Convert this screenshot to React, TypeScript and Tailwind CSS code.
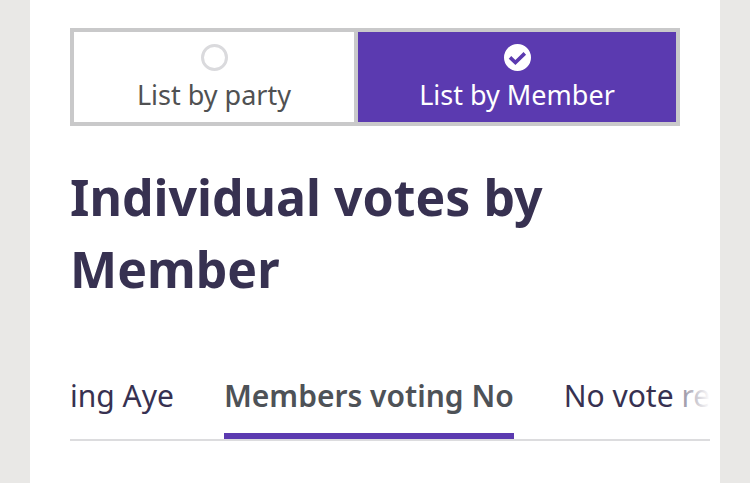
import { useState } from "react";

const views = ["List by party", "List by Member"];
const tabs = ["ing Aye", "Members voting No", "No vote re"];

export default function App() {
  const [view, setView] = useState(1);
  const [tab, setTab] = useState(1);

  return (
    <div className="min-h-screen bg-[#e9e8e6] px-[30px] font-['Noto_Sans',sans-serif]">
      <main className="min-h-screen bg-white px-10 pt-7">
        <div
          role="radiogroup"
          aria-label="Display"
          className="grid grid-cols-[284fr_318fr] border-4 border-[#c9c9ca]"
        >
          {views.map((name, i) => (
            <label
              key={name}
              className={
                "flex cursor-pointer flex-col items-center gap-1 pt-3 pb-[7px] text-[27px] leading-10 " +
                (i === 0 ? "border-r-4 border-[#c9c9ca] " : "") +
                (view === i ? "bg-[#5b3ab0] text-white" : "bg-white text-[#505152]")
              }
            >
              <span className="grid size-[27px] place-items-center">
                <input
                  type="radio"
                  name="view"
                  checked={view === i}
                  onChange={() => setView(i)}
                  className="col-start-1 row-start-1 size-[27px] appearance-none rounded-full border-[3px] border-[#dadadd] bg-white checked:border-white"
                />
                {view === i && (
                  <svg
                    viewBox="0 0 27 27"
                    className="pointer-events-none z-10 col-start-1 row-start-1 size-[27px]"
                    fill="none"
                    stroke="#5b3ab0"
                    strokeWidth="3.6"
                    aria-hidden="true"
                  >
                    <path d="M6 13.4 11.4 18.6 20.8 9.4" />
                  </svg>
                )}
              </span>
              <span>{name}</span>
            </label>
          ))}
        </div>

        <h1 className="mt-[35px] text-[50px] leading-[72px] font-bold text-[#373151]">
          Individual votes by Member
        </h1>

        <div
          role="tablist"
          className="relative mt-[70px] -mr-[30px] flex gap-[50px] border-b-2 border-[#dcdcde]"
        >
          {tabs.map((name, i) => (
            <button
              key={name}
              type="button"
              role="tab"
              aria-selected={tab === i}
              onClick={() => setTab(i)}
              className={
                "shrink-0 cursor-pointer border-b-[6px] pb-4 text-[30px] leading-[42px] whitespace-nowrap " +
                (tab === i
                  ? "border-[#5b3ab0] font-semibold text-[#4e5257]"
                  : "border-transparent text-[#373151]")
              }
            >
              {name}
            </button>
          ))}
          <span className="pointer-events-none absolute inset-y-0 right-0 w-8 bg-linear-to-r from-white/40 to-white" />
        </div>
      </main>
    </div>
  );
}
